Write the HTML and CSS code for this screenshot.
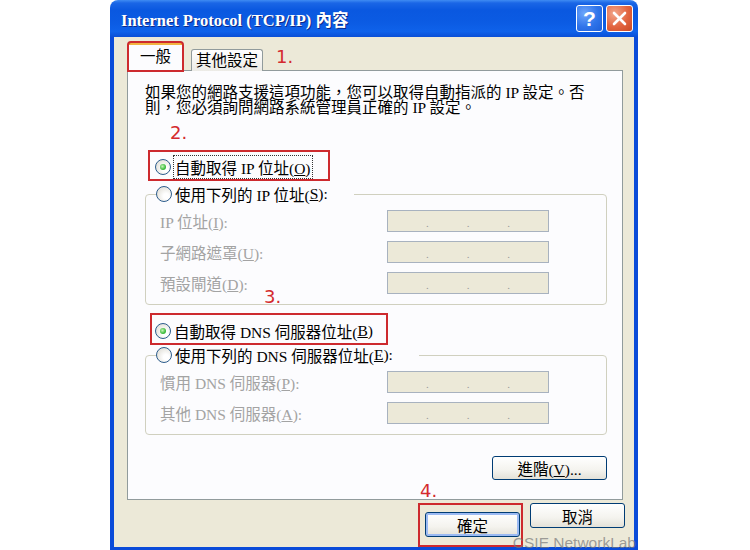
FILE: index.html
```html
<!DOCTYPE html>
<html lang="zh-Hant">
<head>
    <meta charset="UTF-8">
    <title>Internet Protocol (TCP/IP) 內容</title>
    <link rel="stylesheet" href="styles.css">
</head>
<body>
    <div class="window">
        <div class="titlebar">
            <span class="title">Internet Protocol (TCP/IP) 內容</span>
            <button class="tb-btn help">?</button>
            <button class="tb-btn close">
                <svg width="17" height="17" viewBox="0 0 17 17"><path d="M3 3 L14 14 M14 3 L3 14" stroke="#fff" stroke-width="2.6" stroke-linecap="round"/></svg>
            </button>
        </div>
        <div class="frame">
            <div class="tabs">
                <div class="tab active">一般</div>
                <div class="tab">其他設定</div>
                <span class="note note-1">1.</span>
            </div>
            <div class="panel">
                <p class="desc"><span class="desc-line">如果您的網路支援這項功能，您可以取得自動指派的 IP 設定。否</span><span class="desc-line">則，您必須詢問網路系統管理員正確的 IP 設定。</span></p>
                <span class="note note-2">2.</span>

                <div class="mark mark-ip">
                    <label class="option"><span class="radio on"></span><span class="focus">自動取得 IP 位址(<u>O</u>)</span></label>
                </div>
                <fieldset class="group">
                    <legend><label class="option"><span class="radio"></span>使用下列的 IP 位址(<u>S</u>):</label></legend>
                    <div class="row"><span class="label">IP 位址(<u>I</u>):</span><span class="ipbox"><i>.</i><i>.</i><i>.</i></span></div>
                    <div class="row"><span class="label">子網路遮罩(<u>U</u>):</span><span class="ipbox"><i>.</i><i>.</i><i>.</i></span></div>
                    <div class="row"><span class="label">預設閘道(<u>D</u>):</span><span class="ipbox"><i>.</i><i>.</i><i>.</i></span></div>
                </fieldset>

                <div class="mark mark-dns">
                    <label class="option"><span class="radio on"></span>自動取得 DNS 伺服器位址(<u>B</u>)</label>
                </div>
                <fieldset class="group">
                    <legend><label class="option"><span class="radio"></span>使用下列的 DNS 伺服器位址(<u>E</u>):</label></legend>
                    <div class="row"><span class="label">慣用 DNS 伺服器(<u>P</u>):</span><span class="ipbox"><i>.</i><i>.</i><i>.</i></span></div>
                    <div class="row"><span class="label">其他 DNS 伺服器(<u>A</u>):</span><span class="ipbox"><i>.</i><i>.</i><i>.</i></span></div>
                </fieldset>

                <div class="panel-foot">
                    <button class="xp-btn advanced">進階(<u>V</u>)...</button>
                </div>

                <span class="note note-3">3.</span>
                <span class="note note-4">4.</span>
            </div>
            <div class="actions">
                <div class="mark mark-ok"><button class="xp-btn default">確定</button></div>
                <button class="xp-btn">取消</button>
            </div>
        </div>
        <div class="watermark">CSIE NetworkLab</div>
    </div>
</body>
</html>
```
FILE: styles.css
```css
/* Windows XP dialog */
body {
    margin: 0;
    background-color: #fff;
    font-family: "Liberation Serif", "Noto Sans CJK TC", serif;
    font-size: 15.5px;
    color: #000;
}

.window {
    position: relative;
    width: 528px;
    height: 550px;
    margin-left: 110px;
    display: flex;
    flex-direction: column;
}

.titlebar {
    height: 37px;
    flex-shrink: 0;
    display: flex;
    align-items: center;
    padding: 0 5px 0 11px;
    border-radius: 8px 8px 0 0;
    background: linear-gradient(to bottom, #3f8cf3 0, #1a66e6 3px, #0a58e0 10px, #0b5be3 60%, #0f62ea 85%, #0a4fd6 100%);
}

.title {
    flex: 1;
    color: #fff;
    font-weight: bold;
    font-size: 16.5px;
    text-shadow: 1px 1px 0 #0b2a8a;
    padding-top: 1px;
}

.tb-btn {
    width: 27px;
    height: 27px;
    margin-left: 3px;
    padding: 0;
    border: 1px solid #fff;
    border-radius: 3px;
    display: flex;
    align-items: center;
    justify-content: center;
    color: #fff;
}

.help {
    font-family: "Liberation Sans", sans-serif;
    font-weight: bold;
    font-size: 21px;
    background: radial-gradient(circle at 30% 30%, #6ea6fb 0, #2f74ea 55%, #1d5fd9 100%);
}

.close {
    background: radial-gradient(circle at 30% 30%, #f2a78c 0, #e2643f 55%, #c94a24 100%);
}

.frame {
    flex: 1;
    display: flex;
    flex-direction: column;
    background-color: #ece9d8;
    border: 4px solid #0a4bd9;
    border-top: 0;
    padding: 4px 11px 0 13px;
}

/* tabs */
.tabs {
    display: flex;
    align-items: flex-end;
    height: 30px;
    margin-bottom: -1px;
    position: relative;
    z-index: 1;
}

.tab {
    height: 21px;
    padding: 0 4px;
    line-height: 21px;
    border: 1px solid #919b9c;
    border-bottom: 0;
    border-radius: 3px 3px 0 0;
    background: linear-gradient(to bottom, #fff, #ecebe6);
    margin-left: 8px;
}

.tab.active {
    height: 26px;
    line-height: 24px;
    width: 45px;
    margin-left: 1px;
    padding: 0 4px;
    text-align: center;
    border-top: 3px solid #f2b440;
    background: #fcfcfe;
    outline: 2px solid #cd2a2e;
    outline-offset: -1px;
}

.note {
    color: #d42a2e;
    font-family: "DejaVu Sans", sans-serif;
    font-size: 18px;
    line-height: 18px;
}

.note-1 {
    margin: 0 0 5px 13px;
}

/* panel */
.panel {
    position: relative;
    height: 430px;
    flex-shrink: 0;
    display: flex;
    flex-direction: column;
    align-items: flex-start;
    box-sizing: border-box;
    background-color: #fcfcfe;
    border: 1px solid #919b9c;
    padding: 14px 15px 0 17px;
}

.desc {
    margin: 0;
}

.desc-line {
    display: block;
    height: 15px;
    line-height: 15px;
    white-space: nowrap;
}

.note-2 {
    margin: 9px 0 0 25px;
}

.mark {
    border: 2px solid #cd2a2e;
    box-sizing: border-box;
}

.mark-ip {
    width: 182px;
    height: 31px;
    margin: 8px 0 0 3px;
    padding: 6px 0 0 5px;
}

.mark-dns {
    width: 238px;
    height: 32px;
    margin: 8px 0 0 5px;
    padding: 7px 0 0 3px;
}

.option {
    display: flex;
    align-items: center;
    height: 18px;
    white-space: nowrap;
}

.focus {
    outline: 1px dotted #333;
    outline-offset: 0;
    padding: 0 1px;
}

.radio {
    position: relative;
    width: 16px;
    height: 16px;
    box-sizing: border-box;
    margin-right: 3px;
    border: 1px solid #2c5c8c;
    border-radius: 50%;
    background: radial-gradient(circle at 65% 65%, #fff 20%, #d8d6cc 100%);
    flex-shrink: 0;
}

.radio.on::after {
    content: '';
    position: absolute;
    left: 4px;
    top: 4px;
    width: 6px;
    height: 6px;
    border-radius: 50%;
    background: radial-gradient(circle at 40% 40%, #c6f5b5 0, #3dbb3d 60%, #1f9a1f 100%);
}

.group {
    width: 462px;
    box-sizing: border-box;
    margin: 4px 0 0 0;
    padding: 0 0 10px 14px;
    border: 1px solid #d0d0bf;
    border-radius: 4px;
}

.group legend {
    margin-left: 10px;
    padding: 0 26px 0 0;
}

.group legend .option {
    margin-left: -14px;
}

.group .row:first-of-type {
    margin-top: 7px;
}

.row {
    display: flex;
    align-items: center;
    height: 22px;
    margin-top: 9px;
}

.label {
    width: 227px;
    color: #a3a3a3;
}

.label u {
    text-decoration-color: #a3a3a3;
}

.ipbox {
    width: 162px;
    height: 22px;
    box-sizing: border-box;
    display: flex;
    justify-content: space-evenly;
    align-items: flex-end;
    border: 1px solid #a8b2bf;
    background-color: #ece9d8;
}

.ipbox i {
    font-style: normal;
    color: #9a9a9a;
    font-size: 11px;
    line-height: 15px;
}

.mark-dns + .group {
    margin-top: 1px;
}

.panel-foot {
    align-self: stretch;
    display: flex;
    justify-content: flex-end;
    margin-top: 21px;
}

.xp-btn {
    width: 95px;
    height: 25px;
    padding: 0;
    font-family: inherit;
    font-size: 15.5px;
    border: 1px solid #003c74;
    border-radius: 3px;
    background: linear-gradient(to bottom, #fff 0, #f4f3ee 60%, #e3e1d8 100%);
}

.advanced {
    width: 115px;
    height: 24px;
}

.default {
    box-shadow: inset 0 0 0 2px #9bbaf3;
}

.note-3 {
    position: absolute;
    left: 136px;
    top: 217px;
}

.note-4 {
    position: absolute;
    left: 292px;
    top: 411px;
}

/* bottom buttons */
.actions {
    display: flex;
    justify-content: flex-end;
    align-items: flex-start;
    margin: 3px -2px 0 0;
}

.mark-ok {
    padding: 7px 1px 8px 5px;
    margin-right: 7px;
}

.watermark {
    position: absolute;
    right: 2px;
    bottom: -2px;
    font-family: "Liberation Sans", sans-serif;
    font-size: 15.5px;
    color: rgba(120, 120, 120, 0.7);
}
```
